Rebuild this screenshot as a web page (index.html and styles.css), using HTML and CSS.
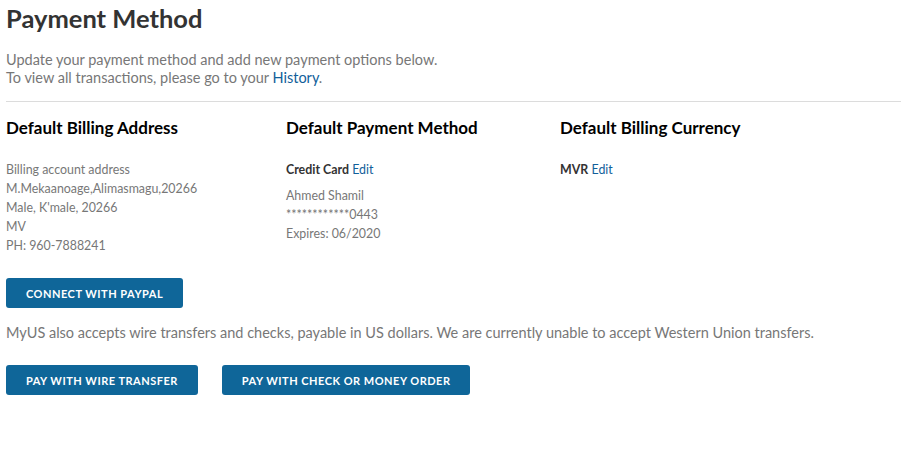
FILE: index.html
```html
<!DOCTYPE html>
<html lang="en">
<head>
    <meta charset="UTF-8">
    <meta name="viewport" content="width=device-width, initial-scale=1.0">
    <title>Payment Method</title>
    <link rel="stylesheet" href="styles.css">
</head>
<body>

    <div class="page">
        <h1 class="page-title">Payment Method</h1>

        <p class="intro">
            Update your payment method and add new payment options below.<br>
            To view all transactions, please go to your <a href="#" class="link">History</a>.
        </p>

        <hr class="divider">

        <div class="defaults">
            <!-- Endereço -->
            <div class="col col-address">
                <h2 class="col-title">Default Billing Address</h2>
                <div class="col-body">
                    <div>Billing account address</div>
                    <div>M.Mekaanoage,Alimasmagu,20266</div>
                    <div>Male, K'male, 20266</div>
                    <div>MV</div>
                    <div>PH: 960-7888241</div>
                </div>
            </div>

            <!-- Cartão -->
            <div class="col col-method">
                <h2 class="col-title">Default Payment Method</h2>
                <div class="col-body">
                    <div class="strong-line"><b>Credit Card</b> <a href="#" class="link">Edit</a></div>
                    <div>Ahmed Shamil</div>
                    <div>************0443</div>
                    <div>Expires: 06/2020</div>
                </div>
            </div>

            <!-- Moeda -->
            <div class="col col-currency">
                <h2 class="col-title">Default Billing Currency</h2>
                <div class="col-body">
                    <div class="strong-line"><b>MVR</b> <a href="#" class="link">Edit</a></div>
                </div>
            </div>
        </div>

        <div class="button-group">
            <button class="button">Connect with PayPal</button>
        </div>

        <p class="note">MyUS also accepts wire transfers and checks, payable in US dollars. We are currently unable to accept Western Union transfers.</p>

        <div class="button-group">
            <button class="button">Pay with wire transfer</button>
            <button class="button">Pay with check or money order</button>
        </div>
    </div>

</body>
</html>
```

FILE: styles.css
```css
body {
    margin: 0;
    font-family: Lato, "Open Sans", sans-serif;
    background-color: #fff;
    color: #333;
}

.page {
    padding: 0 0 0 6px;
}

.page-title {
    font-size: 25.5px;
    font-weight: bold;
    color: #333;
    margin: 0;
    padding-top: 3px;
    line-height: 30px;
}

.intro {
    margin: 18px 0 0 0;
    font-size: 14.5px;
    line-height: 18px;
    color: #777;
}

.link {
    color: #11609a;
    text-decoration: none;
}

.divider {
    border: none;
    border-top: 1px solid #dcdcdc;
    margin: 14px 0 0 0;
}

.defaults {
    display: flex;
    margin-top: 15px;
}

.col-address {
    width: 280px;
}

.col-method {
    width: 274px;
}

.col-title {
    font-size: 17px;
    font-weight: bold;
    color: #000;
    margin: 0;
    line-height: 22px;
}

.col-body {
    margin-top: 21px;
    font-size: 12.4px;
    line-height: 19px;
    color: #777;
}

.strong-line {
    margin-bottom: 7px;
}

.strong-line b {
    color: #333;
}

.button-group {
    display: flex;
    gap: 24px;
}

.button {
    font-family: Lato, "Open Sans", sans-serif;
    font-size: 11px;
    font-weight: bold;
    letter-spacing: 0.5px;
    text-transform: uppercase;
    color: #fff;
    background-color: #0f6699;
    border: none;
    border-radius: 3px;
    height: 30px;
    padding: 0 20px;
    cursor: pointer;
}

.defaults + .button-group {
    margin-top: 23px;
}

.note {
    margin: 15px 0 23px 0;
    font-size: 14.5px;
    line-height: 19px;
    color: #777;
}
```
